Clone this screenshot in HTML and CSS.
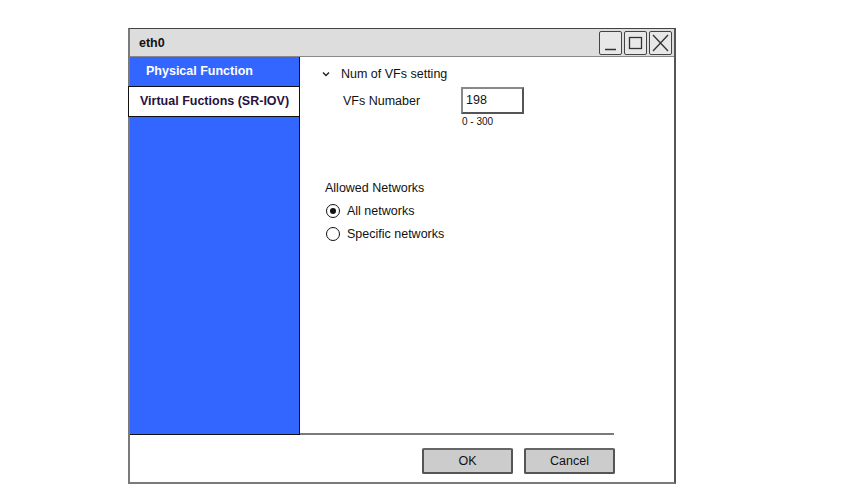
FILE: index.html
```html
<!DOCTYPE html>
<html>
<head>
    <title>eth0</title>
    <link rel="stylesheet" href="styles.css">
</head>
<body>
    <div class="window">
        <div class="titlebar">
            <span class="title">eth0</span>
            <div class="win-btns">
                <span class="win-btn"><svg width="21" height="22" viewBox="0 0 21 22"><line x1="5" y1="17.5" x2="16" y2="17.5" stroke="#333" stroke-width="1.5"/></svg></span>
                <span class="win-btn"><svg width="21" height="22" viewBox="0 0 21 22"><rect x="4.5" y="5.5" width="12" height="11" fill="none" stroke="#333" stroke-width="1.3"/></svg></span>
                <span class="win-btn"><svg width="21" height="22" viewBox="0 0 21 22"><path d="M3 3 L18 19 M18 3 L3 19" stroke="#333" stroke-width="1.3"/></svg></span>
            </div>
        </div>
        <div class="main">
            <div class="sidebar">
                <div class="side-item active">Physical Function</div>
                <div class="side-item selected">Virtual Fuctions (SR-IOV)</div>
            </div>
            <div class="content">
                <div class="section-head">
                    <svg class="chev" width="8" height="6" viewBox="0 0 8 6"><path d="M1 1.5 L4 4.5 L7 1.5" fill="none" stroke="#222" stroke-width="1.4"/></svg>
                    Num of VFs setting
                </div>
                <div class="field-row">
                    <label class="field-label">VFs Numaber</label>
                    <div class="num-box">198</div>
                </div>
                <div class="hint">0 - 300</div>

                <div class="group-label">Allowed Networks</div>
                <div class="radio-row">
                    <span class="radio checked"></span>
                    <span>All networks</span>
                </div>
                <div class="radio-row">
                    <span class="radio"></span>
                    <span>Specific networks</span>
                </div>
            </div>
        </div>
        <div class="footer">
            <button class="btn">OK</button>
            <button class="btn">Cancel</button>
        </div>
    </div>
</body>
</html>
```

FILE: styles.css
```css
body {
    margin: 0;
    background: #fff;
    font-family: "Liberation Sans", Arial, sans-serif;
    font-size: 12.5px;
    color: #111;
}
.window {
    width: 544px;
    height: 453px;
    margin: 28px 0 0 128px;
    border-left: 2px solid #7a7a7a;
    border-right: 2px solid #555;
    border-bottom: 2px solid #7a7a7a;
    border-top: 1px solid #444;
    display: flex;
    flex-direction: column;
}
.titlebar {
    height: 27px;
    background: #dddddd;
    border-bottom: 1px solid #888;
    display: flex;
    align-items: center;
    justify-content: space-between;
}
.title {
    font-weight: bold;
    margin-left: 9px;
    font-size: 12.5px;
}
.win-btns {
    display: flex;
    gap: 2px;
    margin-right: 2px;
}
.win-btn {
    width: 21px;
    height: 22px;
    border: 1px solid #444;
    border-radius: 2px;
    background: #e8e8e8;
    display: block;
}
.win-btn svg {
    display: block;
}
.main {
    display: flex;
    height: 378px;
}
.sidebar {
    width: 170px;
    background: #3366ff;
    border-right: 1px solid #111;
    border-bottom: 1px solid #111;
    box-sizing: border-box;
    height: 378px;
}
.side-item {
    height: 29px;
    line-height: 29px;
    font-weight: bold;
    font-size: 12.5px;
}
.active {
    color: #fff;
    padding-left: 16px;
}
.selected {
    background: #fff;
    color: #2a1040;
    padding-left: 11px;
    border: 1px solid #111;
    margin-left: -2px;
    margin-right: -1px;
    height: 29px;
    line-height: 29px;
}
.content {
    flex: 1;
    margin-right: 60px;
    border-bottom: 2px solid #7a7a7a;
    box-sizing: border-box;
    height: 378px;
}
.section-head {
    margin-top: 10px;
    padding-left: 22px;
    line-height: 14px;
    display: flex;
    align-items: center;
}
.chev {
    margin-right: 11px;
}
.field-row {
    display: flex;
    align-items: center;
    margin-top: 6px;
    padding-left: 43px;
}
.field-label {
    width: 118px;
}
.num-box {
    width: 56px;
    height: 23px;
    line-height: 23px;
    border: 2px solid #555;
    border-top-color: #888;
    border-left-color: #888;
    padding-left: 3px;
}
.hint {
    margin-top: 2px;
    padding-left: 162px;
    font-size: 10px;
    line-height: 12px;
}
.group-label {
    margin-top: 53px;
    padding-left: 25px;
    line-height: 14px;
}
.group-label + .radio-row {
    margin-top: 4px;
}
.radio-row {
    display: flex;
    align-items: center;
    height: 23px;
    padding-left: 26px;
    gap: 7px;
}
.radio {
    width: 12px;
    height: 12px;
    border: 1.5px solid #111;
    border-radius: 50%;
    box-sizing: content-box;
    position: relative;
}
.radio.checked::after {
    content: "";
    position: absolute;
    left: 3px;
    top: 3px;
    width: 6px;
    height: 6px;
    border-radius: 50%;
    background: #111;
}
.footer {
    flex: 1;
    display: flex;
    justify-content: flex-end;
    align-items: flex-start;
    gap: 11px;
    padding: 13px 59px 0 0;
}
.btn {
    width: 91px;
    height: 26px;
    background: #cccccc;
    border: 2px solid #555;
    border-top-color: #666;
    border-radius: 2px;
    font-family: "Liberation Sans", Arial, sans-serif;
    font-size: 12.5px;
    color: #111;
}
```
